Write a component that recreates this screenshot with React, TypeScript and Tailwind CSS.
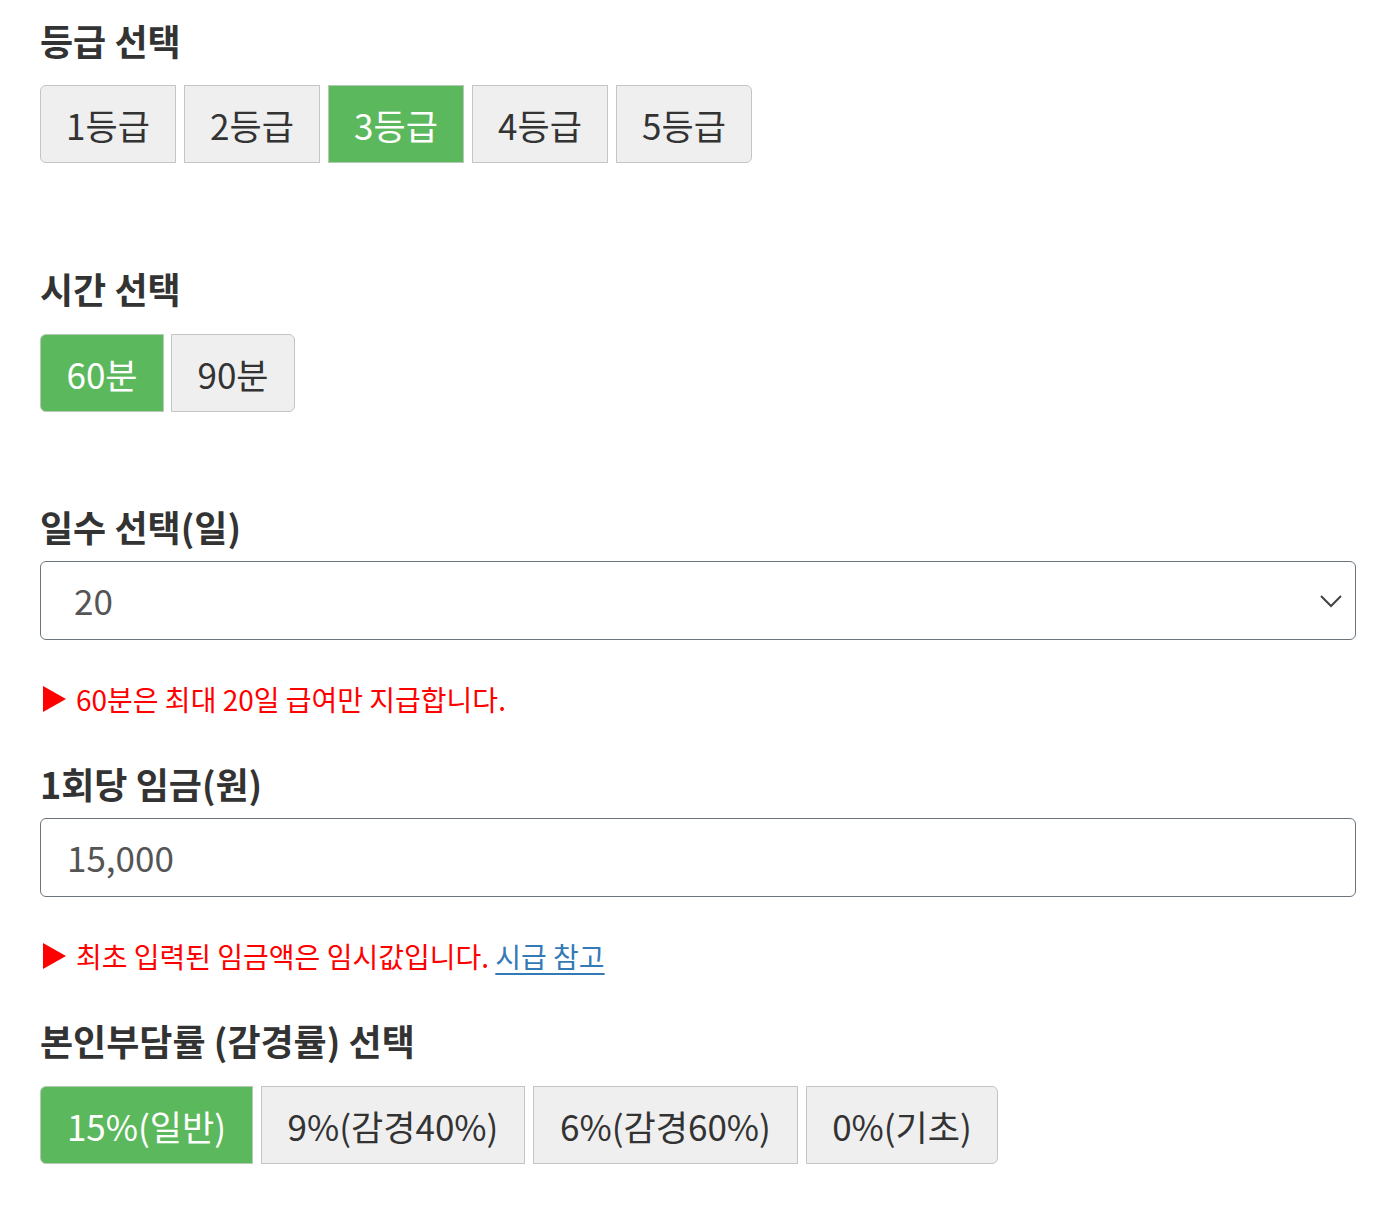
import React, { useState } from 'react';

const FONT = { fontFamily: '"Noto Sans CJK KR", "Noto Sans", sans-serif' };

const GRADES = ['1등급', '2등급', '3등급', '4등급', '5등급'];
const TIMES = ['60분', '90분'];
const RATES = [
  { label: '15%(일반)', w: 'w-[213px]' },
  { label: '9%(감경40%)', w: 'w-[264px]' },
  { label: '6%(감경60%)', w: 'w-[265px]' },
  { label: '0%(기초)', w: 'w-[192px]' },
];

function OptionButton({
  label,
  active,
  first,
  last,
  width,
  onClick,
}: {
  label: string;
  active: boolean;
  first: boolean;
  last: boolean;
  width: string;
  onClick: () => void;
}) {
  return (
    <button
      onClick={onClick}
      className={`h-[78px] ${width} border text-[35px] leading-none flex items-center justify-center ${
        active ? 'bg-[#5cb85c] text-white border-[#b9c9b9]' : 'bg-[#efefef] text-[#333] border-[#c4c4c4]'
      } ${first ? 'rounded-l-[6px]' : ''} ${last ? 'rounded-r-[6px]' : ''}`}
    >
      {label}
    </button>
  );
}

function Heading({ children, className = '' }: { children: React.ReactNode; className?: string }) {
  return <h3 className={`text-[36px] font-bold leading-[44px] text-[#333] ${className}`}>{children}</h3>;
}

function Notice({ children, className = '' }: { children: React.ReactNode; className?: string }) {
  return (
    <p className={`flex items-center text-[28px] leading-[36px] text-[#ff0000] ${className}`}>
      <svg width="23" height="26" viewBox="0 0 23 26" className="ml-[3px] mr-[10px] shrink-0">
        <path d="M0 0 L23 13 L0 26 Z" fill="#ff0000" />
      </svg>
      <span className="whitespace-pre">{children}</span>
    </p>
  );
}

export default function App() {
  const [grade, setGrade] = useState(2);
  const [time, setTime] = useState(0);
  const [rate, setRate] = useState(0);

  return (
    <div className="min-h-screen bg-white pl-[40px] pr-[42px] pt-[18px] pb-10" style={FONT}>
      <Heading>등급 선택</Heading>
      <div className="flex gap-[8px] mt-[23px]">
        {GRADES.map((g, i) => (
          <OptionButton
            key={g}
            label={g}
            active={grade === i}
            first={i === 0}
            last={i === GRADES.length - 1}
            width="w-[136px]"
            onClick={() => setGrade(i)}
          />
        ))}
      </div>

      <Heading className="mt-[103px]">시간 선택</Heading>
      <div className="flex gap-[7px] mt-[24px]">
        {TIMES.map((t, i) => (
          <OptionButton
            key={t}
            label={t}
            active={time === i}
            first={i === 0}
            last={i === TIMES.length - 1}
            width="w-[124px]"
            onClick={() => setTime(i)}
          />
        ))}
      </div>

      <Heading className="mt-[92px]">일수 선택(일)</Heading>
      <div className="relative mt-[13px] h-[79px] border border-[#6c757d] rounded-[6px] flex items-center pl-[33px]">
        <span className="text-[35px] text-[#555]">20</span>
        <svg
          width="22"
          height="14"
          viewBox="0 0 22 14"
          className="absolute right-[13px] top-[32px]"
          fill="none"
          stroke="#444"
          strokeWidth="2"
        >
          <path d="M1 2 L11 12 L21 2" />
        </svg>
      </div>

      <Notice className="mt-[41px]">60분은 최대 20일 급여만 지급합니다.</Notice>

      <Heading className="mt-[44px]">1회당 임금(원)</Heading>
      <div className="mt-[13px] h-[79px] border border-[#6c757d] rounded-[6px] flex items-center pl-[26px]">
        <span className="text-[35px] text-[#555]">15,000</span>
      </div>

      <Notice className="mt-[41px]">
        최초 입력된 임금액은 임시값입니다.{' '}
        <a href="#" className="text-[#337ab7] underline underline-offset-[5px]">
          시급 참고
        </a>
      </Notice>

      <Heading className="mt-[44px]">본인부담률 (감경률) 선택</Heading>
      <div className="flex gap-[8px] mt-[24px]">
        {RATES.map((r, i) => (
          <OptionButton
            key={r.label}
            label={r.label}
            active={rate === i}
            first={i === 0}
            last={i === RATES.length - 1}
            width={r.w}
            onClick={() => setRate(i)}
          />
        ))}
      </div>
    </div>
  );
}
